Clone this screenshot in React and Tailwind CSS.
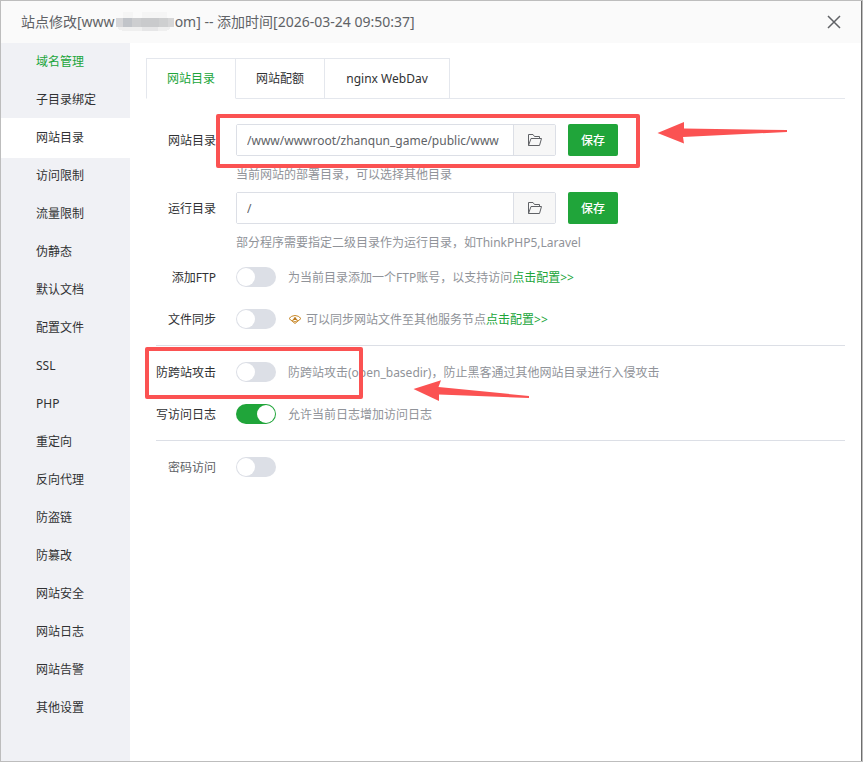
import { useState } from "react";

const menu = [
  "域名管理", "子目录绑定", "网站目录", "访问限制", "流量限制", "伪静态",
  "默认文档", "配置文件", "SSL", "PHP", "重定向", "反向代理", "防盗链",
  "防篡改", "网站安全", "网站日志", "网站告警", "其他设置",
];

function FolderIcon() {
  return (
    <svg width="16" height="16" viewBox="0 0 16 16" fill="none" stroke="#606266" aria-hidden="true">
      <path d="M1.500 13.500V2.500H6L7.500 4.500H12.500V6.500M1.500 13.500L4 6.500H14.500L12.500 13.500Z" strokeLinejoin="round" />
    </svg>
  );
}

function HiddenDomain() {
  return (
    <svg width="60" height="20" viewBox="0 0 60 20" shapeRendering="crispEdges" aria-hidden="true">
      <path d="M8 0H18V6H8ZM27 0H52V6H27Z" fill="#f5f5f5" />
      <path d="M3 15H55V17L51 19H8L3 17Z" fill="#efefef" />
      <path d="M27 15H43V19H27Z" fill="#e6e6e7" />
      <path d="M1 6H8V15H1Z" fill="#d6d6d8" />
      <path d="M8 6H17V15H8Z" fill="#c1c4c9" />
      <path d="M17 6H26V15H17Z" fill="#cdced0" />
      <path d="M26 6H44V15H26Z" fill="#c9cacc" />
      <path d="M44 6H53V15H44Z" fill="#cecfd0" />
      <path d="M53 6H59V15H53Z" fill="#d6d6d7" />
    </svg>
  );
}

function Row({ id, label, muted, children }) {
  return (
    <div className="flex items-center gap-5">
      <label htmlFor={id} className={`w-[60px] shrink-0 pt-0.5 whitespace-nowrap text-right ${muted ? "text-[#606266]" : "text-[#303133]"}`}>
        {label}
      </label>
      {children}
    </div>
  );
}

function PathField({ id, label, value, help }) {
  return (
    <div>
      <Row id={id} label={label}>
        <div className="flex gap-3">
          <div className="flex h-8 w-80 rounded-xs border border-[#dcdfe6]">
            <input id={id} type="text" defaultValue={value} className="min-w-0 flex-1 bg-white px-[10px] pt-0.5 text-[#606266] outline-none" />
            <button type="button" aria-label="选择目录" className="flex w-[42px] items-center justify-center border-l border-[#dcdfe6] bg-[#f7f7f7]">
              <FolderIcon />
            </button>
          </div>
          <button type="button" className="h-8 w-[50px] rounded-xs bg-[#20a53a] pt-0.5 font-medium text-white">保存</button>
        </div>
      </Row>
      <p className="ml-20 h-9 pt-0.5 leading-[34px] text-[#909399]">{help}</p>
    </div>
  );
}

function SwitchRow({ id, label, on = false, muted, children }) {
  return (
    <Row id={id} label={label} muted={muted}>
      <div className="flex items-center gap-3">
        <input
          id={id}
          type="checkbox"
          role="switch"
          defaultChecked={on}
          className="h-5 w-10 shrink-0 appearance-none rounded-full bg-[#dcdfe6] before:m-px before:block before:size-[18px] before:rounded-full before:bg-white before:content-[''] checked:bg-[#20a53a] checked:before:ml-[21px]"
        />
        <span className="flex items-center pt-0.5 text-[#909399]">{children}</span>
      </div>
    </Row>
  );
}

function ConfigLink() {
  return <a href="#config" className="text-[#20a53a]">点击配置&gt;&gt;</a>;
}

export default function App() {
  const [tab, setTab] = useState(0);
  return (
    <div className="relative flex min-h-screen flex-col border border-[#bdbdbd] bg-white font-['Noto_Sans','Noto_Sans_CJK_SC',sans-serif] text-xs leading-5">
      <header className="flex h-[42px] shrink-0 items-center justify-between border-r border-[#6e6e6e] bg-[#fafafa] pr-5 pl-5">
        <h1 className="flex items-center text-sm text-[#606266]">
          <span>站点修改[www</span>
          <HiddenDomain />
          <span>om] -- 添加时间[2026-03-24 09:50:37]</span>
        </h1>
        <button type="button" aria-label="关闭">
          <svg width="14" height="14" viewBox="0 0 14 14" stroke="#606266" strokeWidth="1.5" aria-hidden="true">
            <path d="M1 1L13 13M13 1L1 13" />
          </svg>
        </button>
      </header>
      <div className="flex flex-1 border-r border-[#6e6e6e]">
        <nav className="w-[129px] shrink-0 bg-[#f0f1f5]">
          <ul className="-mt-px">
            {menu.map((m, i) => (
              <li key={m} className="-mb-0.5">
                <a href="#menu" className={`block h-10 pl-[35px] leading-10 ${i === 2 ? "bg-white" : ""} ${i === 0 ? "text-[#20a53a]" : "text-[#303133]"}`}>{m}</a>
              </li>
            ))}
          </ul>
        </nav>
        <main className="min-w-0 flex-1 pt-[15px] pr-4 pl-4">
          <div role="tablist" className="flex border-b border-[#e4e7ed]">
            {["网站目录", "网站配额", "nginx WebDav"].map((t, i) => (
              <button
                key={t}
                type="button"
                role="tab"
                aria-selected={tab === i}
                onClick={() => setTab(i)}
                className={`-mb-px h-[41px] border-t border-r border-[#e4e7ed] px-5 first:border-l last:min-w-[125px] ${tab === i ? "border-b border-b-white text-[#20a53a]" : "border-b text-[#303133]"}`}
              >
                {t}
              </button>
            ))}
          </div>
          <form className="pt-[25px] pl-[10px]">
            <PathField id="site" label="网站目录" value="/www/wwwroot/zhanqun_game/public/www" help="当前网站的部署目录，可以选择其他目录" />
            <PathField id="run" label="运行目录" value="/" help="部分程序需要指定二级目录作为运行目录，如ThinkPHP5,Laravel" />
            <div className="mt-[6px] flex flex-col gap-5 border-b border-[#dcdfe6] pb-[15px]">
              <SwitchRow id="ftp" label="添加FTP">为当前目录添加一个FTP账号，以支持访问<ConfigLink /></SwitchRow>
              <SwitchRow id="sync" label="文件同步">
                <svg className="mr-1" width="14" height="12" viewBox="0 0 14 12" fill="none" stroke="#c9892a" aria-hidden="true">
                  <path d="M1 4.500Q3.500 1.500 7 1.500Q10.500 1.500 13 4.500L7 9.500Z" strokeLinejoin="round" />
                  <path d="M4 6L7 8L10 6M5 5.500H9" />
                  <circle cx="7" cy="4.500" r="1.300" fill="#b9761b" stroke="none" />
                </svg>
                可以同步网站文件至其他服务节点<ConfigLink />
              </SwitchRow>
            </div>
            <div className="mt-[15px] flex flex-col gap-5 border-b border-[#dcdfe6] pb-[15px]">
              <SwitchRow id="basedir" label="防跨站攻击">防跨站攻击(open_basedir)，防止黑客通过其他网站目录进行入侵攻击</SwitchRow>
              <SwitchRow id="log" label="写访问日志" on>允许当前日志增加访问日志</SwitchRow>
            </div>
            <div className="mt-[15px]">
              <SwitchRow id="pwd" label="密码访问" muted />
            </div>
          </form>
        </main>
      </div>
      <div className="pointer-events-none absolute top-[113px] left-[215px] h-[54px] w-[424px] rounded-xs border-4 border-[#fb5252]" />
      <div className="pointer-events-none absolute top-[346px] left-[144px] h-[52px] w-[218px] rounded-xs border-4 border-[#fb5252]" />
      <svg className="pointer-events-none absolute top-[120px] left-[656px]" width="131" height="23" viewBox="657 121 131 23" fill="#fb5252" aria-hidden="true">
        <path d="M657.500 133L684 122V128.500L787 130V132L683 137L684 143.500Z" />
      </svg>
      <svg className="pointer-events-none absolute top-[379px] left-[412px]" width="118" height="22" viewBox="413 380 118 22" fill="#fb5252" aria-hidden="true">
        <path d="M413.500 389L441 380.300L438.500 387L529 396V398L439 394.500V401Z" />
      </svg>
    </div>
  );
}
